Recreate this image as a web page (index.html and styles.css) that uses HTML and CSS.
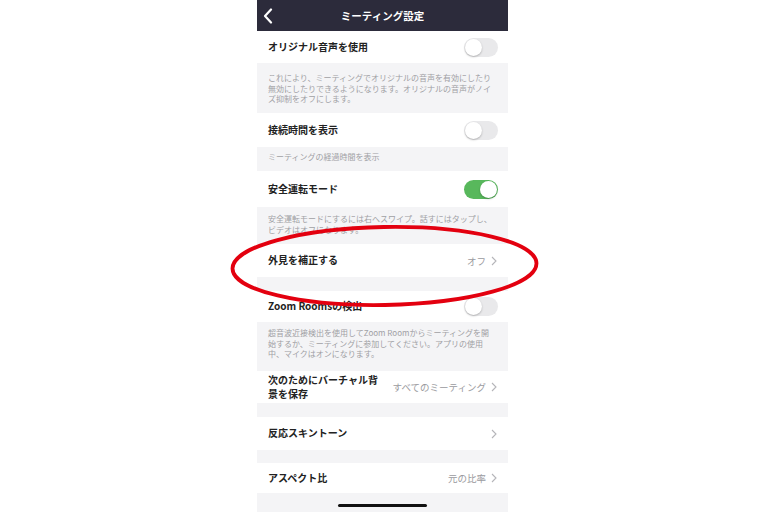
FILE: index.html
```html
<!DOCTYPE html>
<html lang="ja">
<head>
    <meta charset="UTF-8">
    <meta name="viewport" content="width=device-width, initial-scale=1.0">
    <title>ミーティング設定</title>
    <link rel="stylesheet" href="styles.css">
</head>
<body>

<div class="phone">
    <div class="nav">
        <svg class="back" width="12" height="16" viewBox="0 0 12 16">
            <polyline points="9,1.5 3,8 9,14.5" fill="none" stroke="#fff" stroke-width="2.2" stroke-linecap="round" stroke-linejoin="round"/>
        </svg>
        <div class="nav-title">ミーティング設定</div>
    </div>

    <div class="row h32">
        <span class="label">オリジナル音声を使用</span>
        <span class="toggle"></span>
    </div>
    <div class="note note1">これにより、ミーティングでオリジナルの音声を有効にしたり<br>無効にしたりできるようになります。オリジナルの音声がノイ<br>ズ抑制をオフにします。</div>

    <div class="row h34">
        <span class="label">接続時間を表示</span>
        <span class="toggle"></span>
    </div>
    <div class="note note2">ミーティングの経過時間を表示</div>

    <div class="row h36">
        <span class="label">安全運転モード</span>
        <span class="toggle on"></span>
    </div>
    <div class="note note3">安全運転モードにするには右へスワイプ。話すにはタップし、<br>ビデオはオフになります。</div>

    <div class="row h33">
        <span class="label">外見を補正する</span>
        <span class="value">オフ <svg class="chev" width="6" height="10" viewBox="0 0 6 10"><polyline points="1,1 5,5 1,9" fill="none" stroke="#b5b5b9" stroke-width="1.1"/></svg></span>
    </div>
    <div class="gap g14"></div>

    <div class="row h31">
        <span class="label">Zoom Roomsの検出</span>
        <span class="toggle"></span>
    </div>
    <div class="note note5">超音波近接検出を使用してZoom Roomからミーティングを開<br>始するか、ミーティングに参加してください。アプリの使用<br>中、マイクはオンになります。</div>

    <div class="row h32">
        <span class="label two">次のためにバーチャル背<br>景を保存</span>
        <span class="value">すべてのミーティング <svg class="chev" width="6" height="10" viewBox="0 0 6 10"><polyline points="1,1 5,5 1,9" fill="none" stroke="#b5b5b9" stroke-width="1.1"/></svg></span>
    </div>
    <div class="gap g14"></div>

    <div class="row h33">
        <span class="label">反応スキントーン</span>
        <span class="value"><svg class="chev" width="6" height="10" viewBox="0 0 6 10"><polyline points="1,1 5,5 1,9" fill="none" stroke="#b5b5b9" stroke-width="1.1"/></svg></span>
    </div>
    <div class="gap g13"></div>

    <div class="row h30">
        <span class="label">アスペクト比</span>
        <span class="value">元の比率 <svg class="chev" width="6" height="10" viewBox="0 0 6 10"><polyline points="1,1 5,5 1,9" fill="none" stroke="#b5b5b9" stroke-width="1.1"/></svg></span>
    </div>

    <div class="home">
        <div class="home-bar"></div>
    </div>
</div>

<svg class="mark" width="768" height="512" viewBox="0 0 768 512">
    <ellipse cx="384.5" cy="266" rx="152" ry="39" transform="rotate(-1 384.5 266)" fill="none" stroke="#e3000f" stroke-width="3.8"/>
</svg>

</body>
</html>
```

FILE: styles.css
```css
body {
    margin: 0;
    padding: 0;
    background-color: #fff;
    font-family: "Noto Sans CJK JP", "Noto Sans", sans-serif;
    color: #222;
}
.phone {
    width: 251px;
    height: 512px;
    margin-left: 257px;
    background-color: #f4f4f6;
    overflow: hidden;
}
.nav {
    height: 31px;
    background-color: #2c2b3b;
    display: flex;
    align-items: center;
    justify-content: center;
    position: relative;
}
.back {
    position: absolute;
    left: 5px;
    top: 8px;
}
.nav-title {
    color: #fff;
    font-size: 10.5px;
    font-weight: 700;
}
.row {
    background-color: #fff;
    display: flex;
    align-items: center;
    justify-content: space-between;
    padding: 0 10px 0 11px;
}
.h30 { height: 30px; }
.h31 { height: 31px; }
.h32 { height: 32px; }
.h33 { height: 33px; }
.h34 { height: 34px; }
.h36 { height: 36px; }
.label {
    font-size: 10px;
    font-weight: 700;
    line-height: 14.5px;
}
.value {
    font-size: 9.5px;
    color: #9a9a9e;
    display: flex;
    align-items: center;
    gap: 3px;
    padding-right: 1px;
}
.chev {
    margin-left: 2px;
}
.toggle {
    width: 34px;
    height: 19px;
    border-radius: 10px;
    background-color: #e9e9eb;
    position: relative;
    box-sizing: border-box;
}
.toggle::after {
    content: "";
    position: absolute;
    left: 1px;
    top: 1px;
    width: 17px;
    height: 17px;
    border-radius: 50%;
    background-color: #fff;
    box-shadow: 0 1px 2px rgba(0,0,0,0.25);
}
.toggle.on {
    background-color: #58b85c;
}
.toggle.on::after {
    left: 16px;
}
.note {
    font-size: 8px;
    line-height: 10.5px;
    color: #a0a0a4;
    padding: 0 10px 0 11px;
    white-space: nowrap;
}
.note1 { padding-top: 10px; padding-bottom: 8.5px; }
.note2 { padding-top: 5px; padding-bottom: 8.5px; }
.note3 { padding-top: 7px; padding-bottom: 9px; }
.note5 { padding-top: 6px; padding-bottom: 11.5px; }
.gap { background-color: #f4f4f6; }
.g13 { height: 13px; }
.g14 { height: 14px; }
.home {
    padding-top: 11px;
    display: flex;
    justify-content: center;
}
.home-bar {
    width: 89px;
    height: 3px;
    border-radius: 2px;
    background-color: #111;
}
.mark {
    position: absolute;
    left: 0;
    top: 0;
    pointer-events: none;
}
```
